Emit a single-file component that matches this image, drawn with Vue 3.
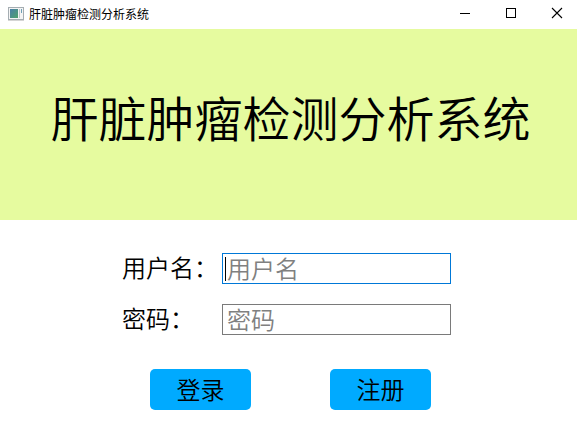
<template>
  <div class="window">
    <header class="title-bar">
      <svg class="app-icon" width="16" height="14" viewBox="0 0 16 14" aria-hidden="true">
        <defs>
          <linearGradient id="screen" x1="0" y1="0" x2="1" y2="1">
            <stop offset="0" stop-color="#4a7fa8" />
            <stop offset="1" stop-color="#4fa36c" />
          </linearGradient>
        </defs>
        <rect x="0.5" y="0.5" width="15" height="12" fill="#f4f4f4" stroke="#a5adb2" />
        <rect x="2" y="2" width="8" height="9" fill="url(#screen)" />
        <rect x="11" y="2" width="1" height="9" fill="#c3c9cc" />
        <rect x="13" y="2" width="1" height="4" fill="#6f9fb5" />
        <rect x="0" y="13" width="16" height="1" fill="#d5d5d5" />
      </svg>
      <span class="title-text">{{ title }}</span>
      <div class="window-controls">
        <button type="button" class="control" aria-label="最小化">
          <svg width="12" height="12" viewBox="0 0 12 12" shape-rendering="crispEdges">
            <rect x="1" y="6" width="10" height="1" fill="#000" />
          </svg>
        </button>
        <button type="button" class="control" aria-label="最大化">
          <svg width="12" height="12" viewBox="0 0 12 12" shape-rendering="crispEdges">
            <rect x="1.5" y="1.5" width="9" height="9" fill="none" stroke="#000" />
          </svg>
        </button>
        <button type="button" class="control" aria-label="关闭">
          <svg width="12" height="12" viewBox="0 0 12 12">
            <path d="M1 1L11 11M11 1L1 11" fill="none" stroke="#000" stroke-width="1.1" />
          </svg>
        </button>
      </div>
    </header>

    <div class="banner">
      <h1 class="banner-title">{{ title }}</h1>
    </div>

    <form class="login-form" @submit.prevent>
      <div class="fields">
        <template v-for="field in fields" :key="field.id">
          <label :for="field.id" class="label">{{ field.label }}：</label>
          <div class="field" :class="{ 'field--active': active === field.id }">
            <input
              :id="field.id"
              v-model="form[field.id]"
              class="input"
              :type="field.type"
              :placeholder="field.label"
              autocomplete="off"
              @focus="active = field.id"
            />
            <span v-if="active === field.id && !form[field.id]" class="caret"></span>
          </div>
        </template>
      </div>

      <div class="actions">
        <button type="submit" class="button">登录</button>
        <button type="button" class="button">注册</button>
      </div>
    </form>
  </div>
</template>

<script setup>
import { reactive, ref } from 'vue'

const title = '肝脏肿瘤检测分析系统'

const fields = [
  { id: 'username', label: '用户名', type: 'text' },
  { id: 'password', label: '密码', type: 'password' },
]

const form = reactive({ username: '', password: '' })
const active = ref('username')
</script>

<style>
body {
  margin: 0;
  background: #fff;
}
</style>

<style scoped>
.window {
  min-height: 100vh;
  background: #fff;
  color: #000;
  font-family: KaiTi, STKaiti, 'Noto Sans CJK SC', sans-serif;
  font-weight: 350;
}

.title-bar {
  display: flex;
  align-items: center;
  height: 29px;
  padding: 0 0 2px 8px;
  box-sizing: border-box;
}

.app-icon {
  flex: none;
  margin-right: 5px;
}

.title-text {
  font-family: 'Noto Sans CJK SC', sans-serif;
  font-size: 12px;
  line-height: 16px;
  font-weight: 400;
  white-space: nowrap;
}

.window-controls {
  display: flex;
  align-self: stretch;
  margin-left: auto;
}

.control {
  display: flex;
  align-items: center;
  justify-content: center;
  width: 46px;
  padding: 0 0 2px 6px;
  border: none;
  background: transparent;
}

.control:hover {
  background: #e5e5e5;
}

.banner {
  display: flex;
  justify-content: center;
  padding: 51px 0 68px 4px;
  background: #e6fb9f;
}

.banner-title {
  margin: 0;
  font-size: 48px;
  line-height: 72px;
  font-weight: 350;
  white-space: nowrap;
}

.login-form {
  display: flex;
  flex-direction: column;
  align-items: center;
  padding: 33px 0 16px;
}

.fields {
  display: grid;
  grid-template-columns: 100px 229px;
  row-gap: 20px;
  align-items: center;
  padding-right: 4px;
}

.label {
  font-size: 24px;
  line-height: 28px;
  padding-bottom: 3px;
  white-space: nowrap;
}

.field {
  position: relative;
  display: flex;
}

.input {
  width: 100%;
  height: 31px;
  padding: 0 4px 2px;
  box-sizing: border-box;
  border: 1px solid #7a7a7a;
  border-radius: 0;
  outline: none;
  background: #fff;
  color: #000;
  font: inherit;
  font-size: 24px;
}

.input::placeholder {
  color: #808080;
  opacity: 1;
}

.field--active .input {
  border-color: #0078d7;
}

.input:placeholder-shown {
  caret-color: transparent;
}

.caret {
  position: absolute;
  top: 4px;
  left: 3px;
  width: 1px;
  height: 24px;
  background: #000;
  pointer-events: none;
}

.actions {
  display: flex;
  gap: 79px;
  margin-top: 34px;
  padding-left: 4px;
}

.button {
  width: 101px;
  height: 41px;
  padding: 0 0 2px;
  border: none;
  border-radius: 5px;
  background: #00aaff;
  color: #000;
  font: inherit;
  font-size: 24px;
  cursor: pointer;
}

.button:hover {
  background: #0099e6;
}
</style>
